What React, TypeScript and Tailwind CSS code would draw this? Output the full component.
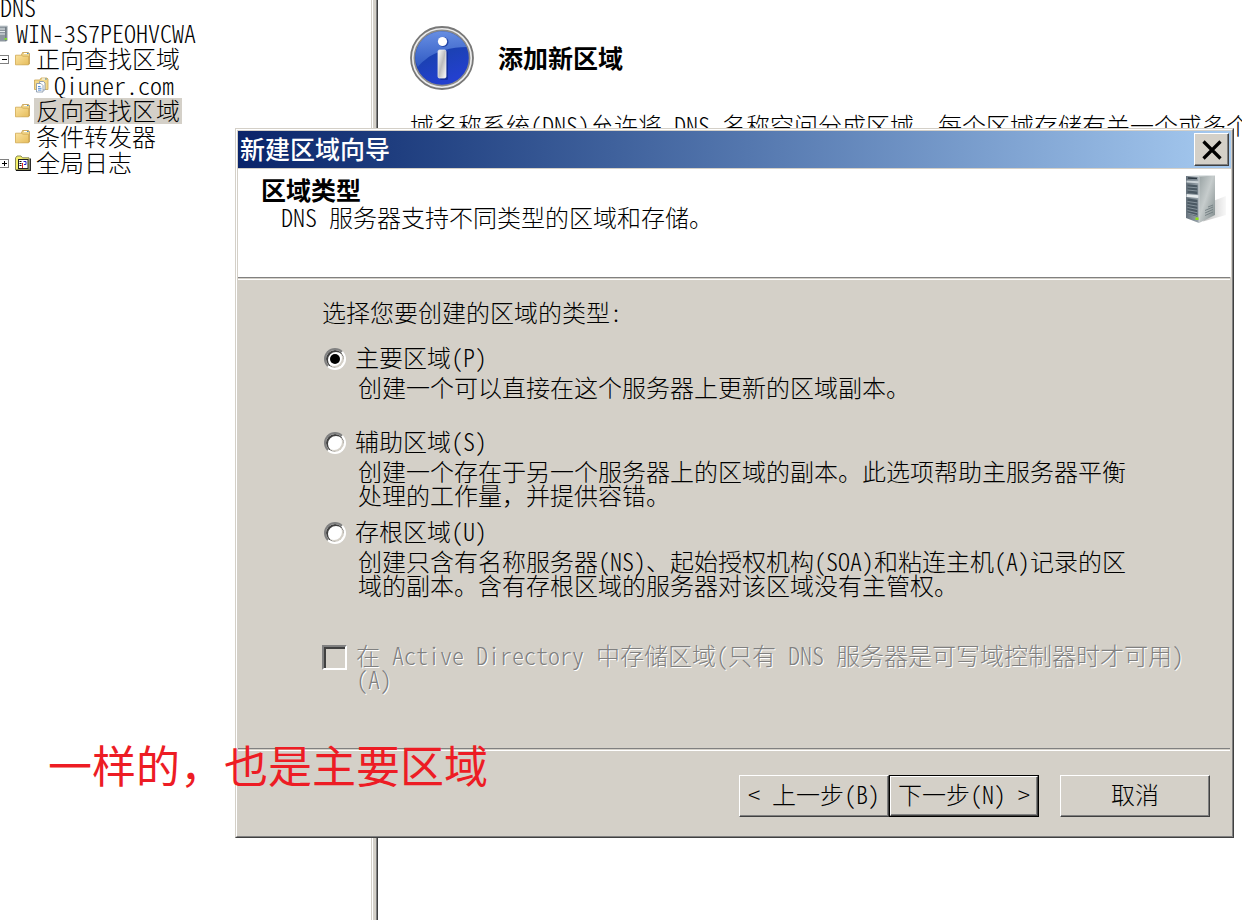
import React, { useState } from "react";

/* Latin runs use the half-width forms so that two letters take one ideograph. */
function T({ children }: { children: string }) {
  const parts = children.split(/([\x20-\x7e]+)/).filter(Boolean);
  return (
    <>
      {parts.map((p, i) =>
        /^[\x20-\x7e]+$/.test(p) ? (
          <span key={i} className="whitespace-pre [font-feature-settings:'hwid']">
            {p}
          </span>
        ) : (
          <React.Fragment key={i}>{p}</React.Fragment>
        ),
      )}
    </>
  );
}

function Folder() {
  return (
    <svg width="15" height="14" viewBox="0 0 15 14" aria-hidden="true">
      <defs>
        <linearGradient id="fold" x1="0" y1="0" x2="1" y2="1">
          <stop offset="0" stopColor="#fbe3a0" />
          <stop offset="1" stopColor="#e6bd5c" />
        </linearGradient>
      </defs>
      <path d="M6.500 3 7.500.5h6l1 1V12h-8z" fill="#f0d68c" stroke="#c39b4c" strokeWidth=".8" />
      <path d="M9 1.500h3" stroke="#fff" />
      <path d="M12 1.500h1.600" stroke="#4a90c8" />
      <path d="M.5 3.200h6.200l1.200 1h5.600v8.600H.5z" fill="url(#fold)" stroke="#d0a850" strokeWidth=".8" />
    </svg>
  );
}

function ZoneIcon() {
  return (
    <svg width="15" height="16" viewBox="0 0 15 16" aria-hidden="true">
      <path d="M.5 3h5.500l1-2h6l1 1v10.500H.5z" fill="#f3d88a" stroke="#c9a452" strokeWidth=".8" />
      <path d="M8 2h3" stroke="#fff" />
      <path d="M11 2h1.800" stroke="#4a90c8" />
      <path d="M5.500 4.500h4l1.500 1.500v7h-5.500z" fill="#fff" stroke="#7d8fa5" strokeWidth=".8" />
      <path d="M2.500 6.500h4.500l2 2v6.500h-6.500z" fill="#fff" stroke="#7d8fa5" strokeWidth=".8" />
      <path d="M4 9.500h2.500M4 11.300h3.500M4 13.100h3.500" stroke="#3f7fd0" strokeWidth=".9" />
    </svg>
  );
}

function LogIcon() {
  return (
    <svg width="16" height="16" viewBox="0 0 16 16" aria-hidden="true">
      <path d="M.5 15V3L2 1h4l1.500 1.800H14V15z" fill="#f4f06a" stroke="#8a8a5a" />
      <path d="M15.300 3.500V15.400H1" fill="none" stroke="#111" strokeWidth="1.200" />
      <rect x="3.500" y="4.500" width="9.500" height="9" fill="#fff" stroke="#222" />
      <path d="M5.500 6v6" stroke="#111" strokeDasharray="1 1" strokeWidth="2" />
      <path d="M7.500 8v5" stroke="#d22" />
      <path d="M8.500 6.500h2.500v3H9" fill="none" stroke="#22c" />
    </svg>
  );
}

function SmallServer() {
  return (
    <svg width="8" height="17" viewBox="0 0 8 17" aria-hidden="true">
      <path d="M0 1h7.500v14.500L6 16.500H0z" fill="#8d979f" />
      <path d="M0 1h7.500" stroke="#c9d0d4" />
      <path d="M0 4h5M0 6.500h5M0 9h5" stroke="#e3e8ea" />
      <path d="M5.800 2v14" stroke="#6c767e" />
      <rect x="4.500" y="13" width="2.500" height="1.800" fill="#7fe02c" />
    </svg>
  );
}

function Expander({ open }: { open: boolean }) {
  return (
    <svg width="9" height="9" viewBox="0 0 9 9" shapeRendering="crispEdges" aria-hidden="true">
      <rect x="0" y="0" width="9" height="9" fill="#808080" />
      <rect x="0" y="1" width="8" height="7" fill="#fff" />
      <rect x="2" y="4" width="5" height="1" fill="#000" />
      {!open && <rect x="4" y="2" width="1" height="5" fill="#000" />}
    </svg>
  );
}

function InfoIcon() {
  return (
    <svg width="64" height="64" viewBox="0 0 64 64" aria-hidden="true">
      <defs>
        <linearGradient id="blue" x1="0" y1="0" x2=".4" y2="1">
          <stop offset="0" stopColor="#3f6fd8" />
          <stop offset=".5" stopColor="#1b41b2" />
          <stop offset="1" stopColor="#2340cf" />
        </linearGradient>
        <linearGradient id="gloss" x1="0" y1="0" x2="0" y2="1">
          <stop offset="0" stopColor="#7096e6" />
          <stop offset="1" stopColor="#3560c8" />
        </linearGradient>
        <linearGradient id="stem" x1="0" y1="0" x2="1" y2="1">
          <stop offset="0" stopColor="#fff" />
          <stop offset=".5" stopColor="#bcbcbc" />
          <stop offset="1" stopColor="#fff" />
        </linearGradient>
      </defs>
      <circle cx="32" cy="32" r="31" fill="#ececec" stroke="#787878" strokeWidth="1.800" />
      <circle cx="32" cy="32" r="27.600" fill="url(#blue)" stroke="#8a8a8a" strokeWidth="1.600" />
      <path d="M5.500 32C6 16 18 5.500 32 5.500c11 0 20 6 24.500 15.500C42 21 25 25 15 34c-4 3-6 5-7 7-1.800-3-2.500-6-2.500-9z" fill="url(#gloss)" opacity=".85" />
      <rect x="30" y="25" width="8" height="29" rx="1.500" fill="#10288c" opacity=".7" />
      <circle cx="33.500" cy="16" r="5" fill="#2446a8" />
      <circle cx="32.500" cy="15.500" r="4.600" fill="#fff" />
      <rect x="28" y="24" width="8" height="28" rx="1.500" fill="url(#stem)" stroke="#e8e8e8" strokeWidth=".8" />
    </svg>
  );
}

function ServerIcon() {
  return (
    <svg width="42" height="50" viewBox="0 0 42 50" aria-hidden="true">
      <defs>
        <linearGradient id="side" x1="0" y1="0" x2="1" y2="1">
          <stop offset="0" stopColor="#98a2a3" />
          <stop offset=".45" stopColor="#c6cccc" />
          <stop offset="1" stopColor="#7d8889" />
        </linearGradient>
        <linearGradient id="front" x1="0" y1="0" x2="1" y2="0">
          <stop offset="0" stopColor="#66727c" />
          <stop offset="1" stopColor="#9aa5ac" />
        </linearGradient>
        <linearGradient id="cast" x1="0" y1="0" x2="1" y2="0">
          <stop offset="0" stopColor="#bfbfbf" />
          <stop offset="1" stopColor="#f8f8f8" />
        </linearGradient>
      </defs>
      <path d="M28 27 41 22v19L18 47.500z" fill="url(#cast)" />
      <path d="M1 2 12 1h18L14 3z" fill="#dfe4e5" />
      <path d="M14 2.500 30 1.500V41L14 49z" fill="url(#side)" />
      <path d="M1 2l13 .8V49L1 44z" fill="url(#front)" />
      <path d="M3 4l9 .5" stroke="#2f3a43" strokeWidth="1.600" />
      <path d="M1.500 7.500l12 .8" stroke="#cbd3d7" strokeWidth="2" />
      <path d="M2.500 10.500l10 .7v9L2.500 19z" fill="#4b5963" />
      <path d="M2.500 13l10 .8M2.500 16l10 1" stroke="#8c99a2" strokeWidth=".9" />
      <path d="M1.500 21.500l12 1.200" stroke="#e6ebed" strokeWidth="2.800" />
      <path d="M2.500 24.500l10 1.200v17L2.500 39.500z" fill="#4b5963" />
      <path d="M2.500 27.500l10 1.400M2.500 30.500l10 1.700M2.500 33.500l10 2M2.500 36.500l10 2.300M2.500 39l10 2.600" stroke="#8c99a2" strokeWidth=".9" />
      <path d="M14 3v46" stroke="#d5dbdd" strokeWidth=".8" />
      <path d="M20 39l8-3.500M20 41.500l8-3.500M20 36.500l8-3.500M23 33l5-2" stroke="#69767a" strokeWidth=".8" />
      <rect x="10.500" y="43.500" width="3" height="2.500" fill="#8fe414" />
    </svg>
  );
}

const zoneTypes = [
  { id: "primary", label: "主要区域(P)", lines: ["创建一个可以直接在这个服务器上更新的区域副本。"], space: "mt-[21px]" },
  {
    id: "secondary",
    label: "辅助区域(S)",
    lines: ["创建一个存在于另一个服务器上的区域的副本。此选项帮助主服务器平衡", "处理的工作量，并提供容错。"],
    space: "mt-[30px]",
  },
  {
    id: "stub",
    label: "存根区域(U)",
    lines: ["创建只含有名称服务器(NS)、起始授权机构(SOA)和粘连主机(A)记录的区", "域的副本。含有存根区域的服务器对该区域没有主管权。"],
    space: "mt-[12px]",
  },
];

function Separator() {
  return <div className="mr-px h-[3px] border-t border-b border-t-[#808080] border-b-white bg-[#d4d0c8]" />;
}

function PushButton({ children, primary }: { children: string; primary?: boolean }) {
  return (
    <button
      type="button"
      className={
        primary
          ? "h-[42px] w-[150px] border border-black bg-[#d4d0c8] leading-6"
          : "h-[42px] w-[150px] bg-[#d4d0c8] leading-6"
      }
    >
      <span className="flex h-full w-full items-center justify-center border border-t-white border-r-[#404040] border-b-[#404040] border-l-white pb-1 shadow-[inset_-1px_-1px_0_#808080]">
        <span className="whitespace-pre">
          <T>{children}</T>
        </span>
      </span>
    </button>
  );
}

function Wizard() {
  const [zone, setZone] = useState("primary");
  return (
    <section
      role="dialog"
      aria-labelledby="wizard-title"
      className="absolute top-32 right-2 left-[235px] border border-t-[#d4d0c8] border-r-[#404040] border-b-[#404040] border-l-[#d4d0c8] bg-[#d4d0c8]"
    >
      <div className="border border-t-white border-r-[#808080] border-b-[#808080] border-l-white p-px">
        <header className="flex h-[37px] items-center justify-between bg-linear-to-r from-[#0a246a] to-[#a6caf0] px-0.5">
          <h1 id="wizard-title" className="pb-1 text-[25px] leading-6 font-medium text-white">
            新建区域向导
          </h1>
          <button
            type="button"
            aria-label="关闭"
            className="flex h-[33px] w-[35px] items-center justify-center border border-t-white border-r-[#404040] border-b-[#404040] border-l-white bg-[#d4d0c8] shadow-[inset_-1px_-1px_0_#808080]"
          >
            <svg width="20" height="20" viewBox="0 0 20 20" aria-hidden="true">
              <path d="M1.500 1.500l17 17M18.500 1.500l-17 17" stroke="#000" strokeWidth="3.200" />
            </svg>
          </button>
        </header>
        <div className="mt-px flex h-[108px] items-start justify-between bg-white pt-[5px] pr-1 pl-[23px]">
          <div className="pt-0.5">
            <h2 className="text-[25px] leading-[27px] font-bold">区域类型</h2>
            <p className="pl-5 leading-[27px]">
              <T>DNS 服务器支持不同类型的区域和存储。</T>
            </p>
          </div>
          <ServerIcon />
        </div>
        <Separator />
        <form className="pt-5 pb-[57px] pl-[84px] whitespace-nowrap">
          <p>
            <T>选择您要创建的区域的类型:</T>
          </p>
          {zoneTypes.map((z) => (
            <div key={z.id} className={z.space}>
              <div className="flex h-6 items-start gap-[9px] pl-0.5">
                <input
                  type="radio"
                  name="zone"
                  id={z.id}
                  checked={zone === z.id}
                  onChange={() => setZone(z.id)}
                  className="mt-[3px] flex h-[22px] w-[22px] appearance-none items-center justify-center rounded-full border-2 border-t-[#808080] border-r-white border-b-white border-l-[#808080] bg-white shadow-[inset_1px_1px_0_1px_#404040,inset_-1px_-1px_0_1px_#d4d0c8] checked:before:h-[10px] checked:before:w-[10px] checked:before:rounded-full checked:before:bg-black checked:before:content-['']"
                />
                <label htmlFor={z.id}>
                  <T>{z.label}</T>
                </label>
              </div>
              <p className="mt-1.5 pl-9">
                {z.lines.map((l) => (
                  <span key={l} className="block">
                    <T>{l}</T>
                  </span>
                ))}
              </p>
            </div>
          ))}
          <div className="mt-[46px] flex items-start gap-[9px] text-[#808080] [text-shadow:1px_1px_0_#ffffff]">
            <input
              type="checkbox"
              id="store-ad"
              disabled
              className="mt-0.5 h-[25px] w-[25px] appearance-none border-2 border-t-[#808080] border-r-white border-b-white border-l-[#808080] bg-[#d4d0c8] shadow-[inset_2px_2px_0_#404040]"
            />
            <label htmlFor="store-ad">
              <span className="block">
                <T>在 Active Directory 中存储区域(只有 DNS 服务器是可写域控制器时才可用)</T>
              </span>
              <span className="block">
                <T>(A)</T>
              </span>
            </label>
          </div>
        </form>
        <Separator />
        <footer className="flex justify-end pt-6 pr-[21px] pb-[18px]">
          <PushButton>{"< 上一步(B)"}</PushButton>
          <PushButton primary>{"下一步(N) >"}</PushButton>
          <div className="ml-[21px] flex">
            <PushButton>取消</PushButton>
          </div>
        </footer>
      </div>
    </section>
  );
}

export default function App() {
  return (
    <div className="relative flex min-h-screen overflow-hidden bg-white font-['Noto_Sans_CJK_SC',sans-serif] text-[24px] leading-6 font-light text-black">
      <nav aria-label="DNS" className="w-[371px] shrink-0 overflow-hidden">
        <ul className="-mt-[6px] whitespace-nowrap">
          <li className="flex h-[26px] items-center">
            <span>
              <T>DNS</T>
            </span>
          </li>
          <li className="flex h-[26px] items-center gap-2">
            <SmallServer />
            <span>
              <T>WIN-3S7PEOHVCWA</T>
            </span>
          </li>
          <li className="flex h-[26px] items-center">
            <Expander open />
            <span className="ml-1.5">
              <Folder />
            </span>
            <span className="ml-1 px-0.5 pb-0.5">正向查找区域</span>
          </li>
          <li className="flex h-[26px] items-center pl-[34px]">
            <ZoneIcon />
            <span className="ml-[5px]">
              <T>Qiuner.com</T>
            </span>
          </li>
          <li className="flex h-[26px] items-center pl-[15px]">
            <Folder />
            <span className="ml-1 flex h-[26px] items-center bg-[#d4d0c8] px-0.5 pb-0.5">反向查找区域</span>
          </li>
          <li className="flex h-[26px] items-center pl-[15px]">
            <Folder />
            <span className="ml-1 px-0.5 pb-0.5">条件转发器</span>
          </li>
          <li className="flex h-[26px] items-center">
            <Expander open={false} />
            <span className="ml-1.5">
              <LogIcon />
            </span>
            <span className="ml-[3px] px-0.5 pb-0.5">全局日志</span>
          </li>
        </ul>
      </nav>
      <div className="flex w-[7px] shrink-0 border-l border-[#d4d0c8]">
        <div className="ml-px flex-1 border-r border-[#404040] bg-[#d4d0c8] shadow-[inset_-1px_0_0_#808080]" />
      </div>
      <main className="min-w-0 flex-1 overflow-hidden pt-[26px] pl-8">
        <div className="flex items-center gap-6">
          <InfoIcon />
          <h2 className="pb-0.5 text-[25px] leading-6 font-bold">添加新区域</h2>
        </div>
        <p className="mt-[23px] whitespace-nowrap">
          <T>域名称系统(DNS)允许将 DNS 名称空间分成区域。每个区域存储有关一个或多个</T>
        </p>
      </main>
      <Wizard />
      <p className="absolute top-[742px] left-12 text-[44px] leading-[44px] font-normal whitespace-nowrap text-[#ed1c24]">
        一样的，也是主要区域
      </p>
    </div>
  );
}
